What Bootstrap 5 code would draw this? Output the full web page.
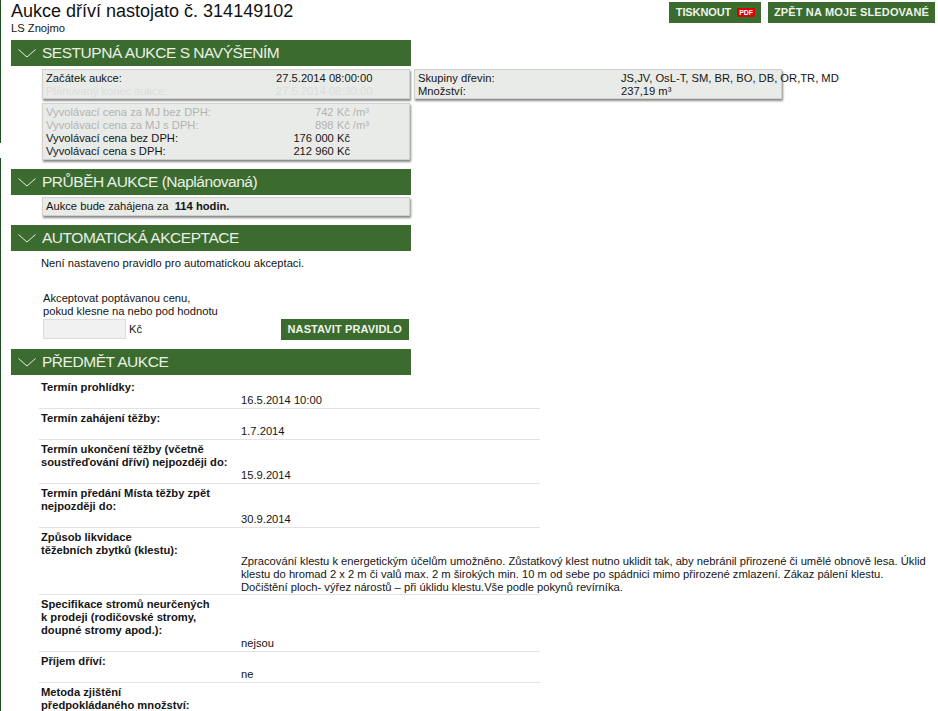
<!DOCTYPE html>
<html lang="cs">
<head>
    <meta charset="UTF-8">
    <title>Aukce dříví nastojato č. 314149102</title>
    <link href="https://cdn.jsdelivr.net/npm/bootstrap@5.3.0/dist/css/bootstrap.min.css" rel="stylesheet">
    <style>
        body {
            font-family: "Liberation Sans", Arial, sans-serif;
            font-size: 11.2px;
            line-height: 13px;
            color: #151515;
            overflow: hidden;
            height: 711px;
            background:
                linear-gradient(#1f4f22, #1f4f22) 0 0 / 1px 143px no-repeat,
                linear-gradient(#1f4f22, #1f4f22) 0 158px / 1px 553px no-repeat,
                #fff;
        }
        .page-head { padding: 2px 3px 0 11px; height: 40px; }
        .title-block { margin-top: -1px; }
        .page-title { font-size: 18px; line-height: 21px; font-weight: 400; margin: 0; color: #111; }
        .btn-gap { gap: 7px; }
        .green-btn {
            background: #3b6b2e;
            color: #eef3ea;
            border: 0;
            border-radius: 0;
            font-size: 11px;
            line-height: 13px;
            font-weight: 700;
            letter-spacing: .16px;
            padding: 4px 6px;
            height: 21px;
        }
        .green-btn:hover { background: #3b6b2e; color: #eef3ea; }
        .print-btn { letter-spacing: -.1px; padding: 4px 5px 4px 7px; }
        .rule-btn { letter-spacing: .12px; padding: 4px 7px; }
        .pdf-tag {
            background: #d8000f;
            border: 1px solid #2f7a1f;
            color: #fff;
            font-size: 7px;
            line-height: 9px;
            padding: 0 2px;
            margin-left: 5px;
            vertical-align: 1px;
            display: inline-block;
        }
        .section-bar {
            width: 400px;
            height: 26px;
            margin-left: 11px;
            background: #3b6b2e;
            color: #eaf0e6;
            font-size: 15.5px;
            line-height: 26px;
            letter-spacing: -.47px;
        }
        .section-bar svg { margin: 0 6px 0 7px; }
        .bar-gap { margin-top: 9px; }
        .box-area { margin: 3px 0 0 42px; }
        .info-box {
            width: 368px;
            background: #e9ebe8;
            border: 1px solid #cfd1ce;
            box-shadow: 1px 2px 2px #8a8a8a;
            padding: 2px 3px 0;
        }
        .price-box { padding-bottom: 1px; }
        .info-row { display: grid; grid-template-columns: 230px 1fr; white-space: nowrap; }
        .info-row2 { display: grid; grid-template-columns: 203px 1fr; white-space: nowrap; }
        .dim { color: #b3b3b3; }
        .dimmer { color: #dcdcdc; }
        .val-wide { padding-right: 37px; }
        .val-short { padding-right: 56px; }
        .box-progress { margin: 2px 0 0 42px; padding: 2px 3px; }
        .no-rule { margin: 6px 0 0 41px; }
        .rule-form { padding: 22px 0 0 43px; width: 409px; }
        .form-line { margin-top: 1px; }
        .kc-gap { gap: 3px; }
        .rule-input { width: 83px; height: 20px; background: #f1f1f1; border: 1px solid #dcdcdc; }
        .subject-list { margin-top: 3px; }
        .subject-row { width: 501px; margin-left: 39px; padding: 3px 0 1px 2px; border-bottom: 1px solid #e2e2e2; }
        .subject-label { width: 190px; font-weight: 700; }
        .subject-val { margin-left: 200px; width: 696px; }
        .val-tight { margin-top: -2px; margin-bottom: -1px; }
    </style>
</head>
<body>
    <div class="page-head d-flex justify-content-between">
        <div class="title-block">
            <h1 class="page-title">Aukce dříví nastojato č. 314149102</h1>
            <div>LS Znojmo</div>
        </div>
        <div class="d-flex btn-gap align-items-start">
            <a class="btn green-btn print-btn" href="#">TISKNOUT<span class="pdf-tag">PDF</span></a>
            <a class="btn green-btn" href="#">ZPĚT NA MOJE SLEDOVANÉ</a>
        </div>
    </div>

    <div class="section-bar d-flex align-items-center">
        <svg width="18" height="9" viewBox="0 0 18 9"><polyline points="0.5,0.5 9,8 17.5,0.5" fill="none" stroke="#eaf0e6" stroke-width="1"/></svg>
        SESTUPNÁ AUKCE S NAVÝŠENÍM
    </div>
    <div class="d-flex gap-1 box-area">
        <div class="d-flex flex-column gap-1">
            <div class="info-box">
                <div class="info-row"><span>Začátek aukce:</span><span>27.5.2014 08:00:00</span></div>
                <div class="info-row dimmer"><span>Plánovaný konec aukce:</span><span>27.5.2014 08:30:00</span></div>
            </div>
            <div class="info-box price-box">
                <div class="info-row dim"><span>Vyvolávací cena za MJ bez DPH:</span><span class="text-end val-wide">742 Kč /m³</span></div>
                <div class="info-row dim"><span>Vyvolávací cena za MJ s DPH:</span><span class="text-end val-wide">898 Kč /m³</span></div>
                <div class="info-row"><span>Vyvolávací cena bez DPH:</span><span class="text-end val-short">176 000 Kč</span></div>
                <div class="info-row"><span>Vyvolávací cena s DPH:</span><span class="text-end val-short">212 960 Kč</span></div>
            </div>
        </div>
        <div class="info-box align-self-start">
            <div class="info-row2"><span>Skupiny dřevin:</span><span>JS,JV, OsL-T, SM, BR, BO, DB, OR,TR, MD</span></div>
            <div class="info-row2"><span>Množství:</span><span>237,19 m³</span></div>
        </div>
    </div>

    <div class="section-bar bar-gap d-flex align-items-center">
        <svg width="18" height="9" viewBox="0 0 18 9"><polyline points="0.5,0.5 9,8 17.5,0.5" fill="none" stroke="#eaf0e6" stroke-width="1"/></svg>
        PRŮBĚH AUKCE (Naplánovaná)
    </div>
    <div class="info-box box-progress">Aukce bude zahájena za &nbsp;<b>114 hodin.</b></div>

    <div class="section-bar bar-gap d-flex align-items-center">
        <svg width="18" height="9" viewBox="0 0 18 9"><polyline points="0.5,0.5 9,8 17.5,0.5" fill="none" stroke="#eaf0e6" stroke-width="1"/></svg>
        AUTOMATICKÁ AKCEPTACE
    </div>
    <div class="no-rule">Není nastaveno pravidlo pro automatickou akceptaci.</div>
    <div class="rule-form">
        <div>Akceptovat poptávanou cenu,<br>pokud klesne na nebo pod hodnotu</div>
        <div class="d-flex justify-content-between align-items-start form-line">
            <div class="d-flex kc-gap align-items-center"><input class="rule-input" type="text"><span>Kč</span></div>
            <a class="btn green-btn rule-btn" href="#">NASTAVIT PRAVIDLO</a>
        </div>
    </div>

    <div class="section-bar bar-gap d-flex align-items-center">
        <svg width="18" height="9" viewBox="0 0 18 9"><polyline points="0.5,0.5 9,8 17.5,0.5" fill="none" stroke="#eaf0e6" stroke-width="1"/></svg>
        PŘEDMĚT AUKCE
    </div>
    <div class="subject-list">
        <div class="subject-row"><div class="subject-label">Termín prohlídky:</div><div class="subject-val">16.5.2014 10:00</div></div>
        <div class="subject-row"><div class="subject-label">Termín zahájení těžby:</div><div class="subject-val">1.7.2014</div></div>
        <div class="subject-row"><div class="subject-label">Termín ukončení těžby (včetně soustřeďování dříví) nejpozději do:</div><div class="subject-val">15.9.2014</div></div>
        <div class="subject-row"><div class="subject-label">Termín předání Místa těžby zpět nejpozději do:</div><div class="subject-val">30.9.2014</div></div>
        <div class="subject-row"><div class="subject-label">Způsob likvidace<br>těžebních zbytků (klestu):</div><div class="subject-val val-tight">Zpracování klestu k energetickým účelům umožněno. Zůstatkový klest nutno uklidit tak, aby nebránil přirozené či umělé obnově lesa. Úklid klestu do hromad 2 x 2 m či valů max. 2 m širokých min. 10 m od sebe po spádnici mimo přirozené zmlazení. Zákaz pálení klestu.<br>Dočištění ploch- výřez nárostů – při úklidu klestu.Vše podle pokynů revírníka.</div></div>
        <div class="subject-row"><div class="subject-label">Specifikace stromů neurčených<br>k prodeji (rodičovské stromy, doupné stromy apod.):</div><div class="subject-val">nejsou</div></div>
        <div class="subject-row"><div class="subject-label">Příjem dříví:</div><div class="subject-val">ne</div></div>
        <div class="subject-row"><div class="subject-label">Metoda zjištění<br>předpokládaného množství:</div></div>
    </div>
</body>
</html>
